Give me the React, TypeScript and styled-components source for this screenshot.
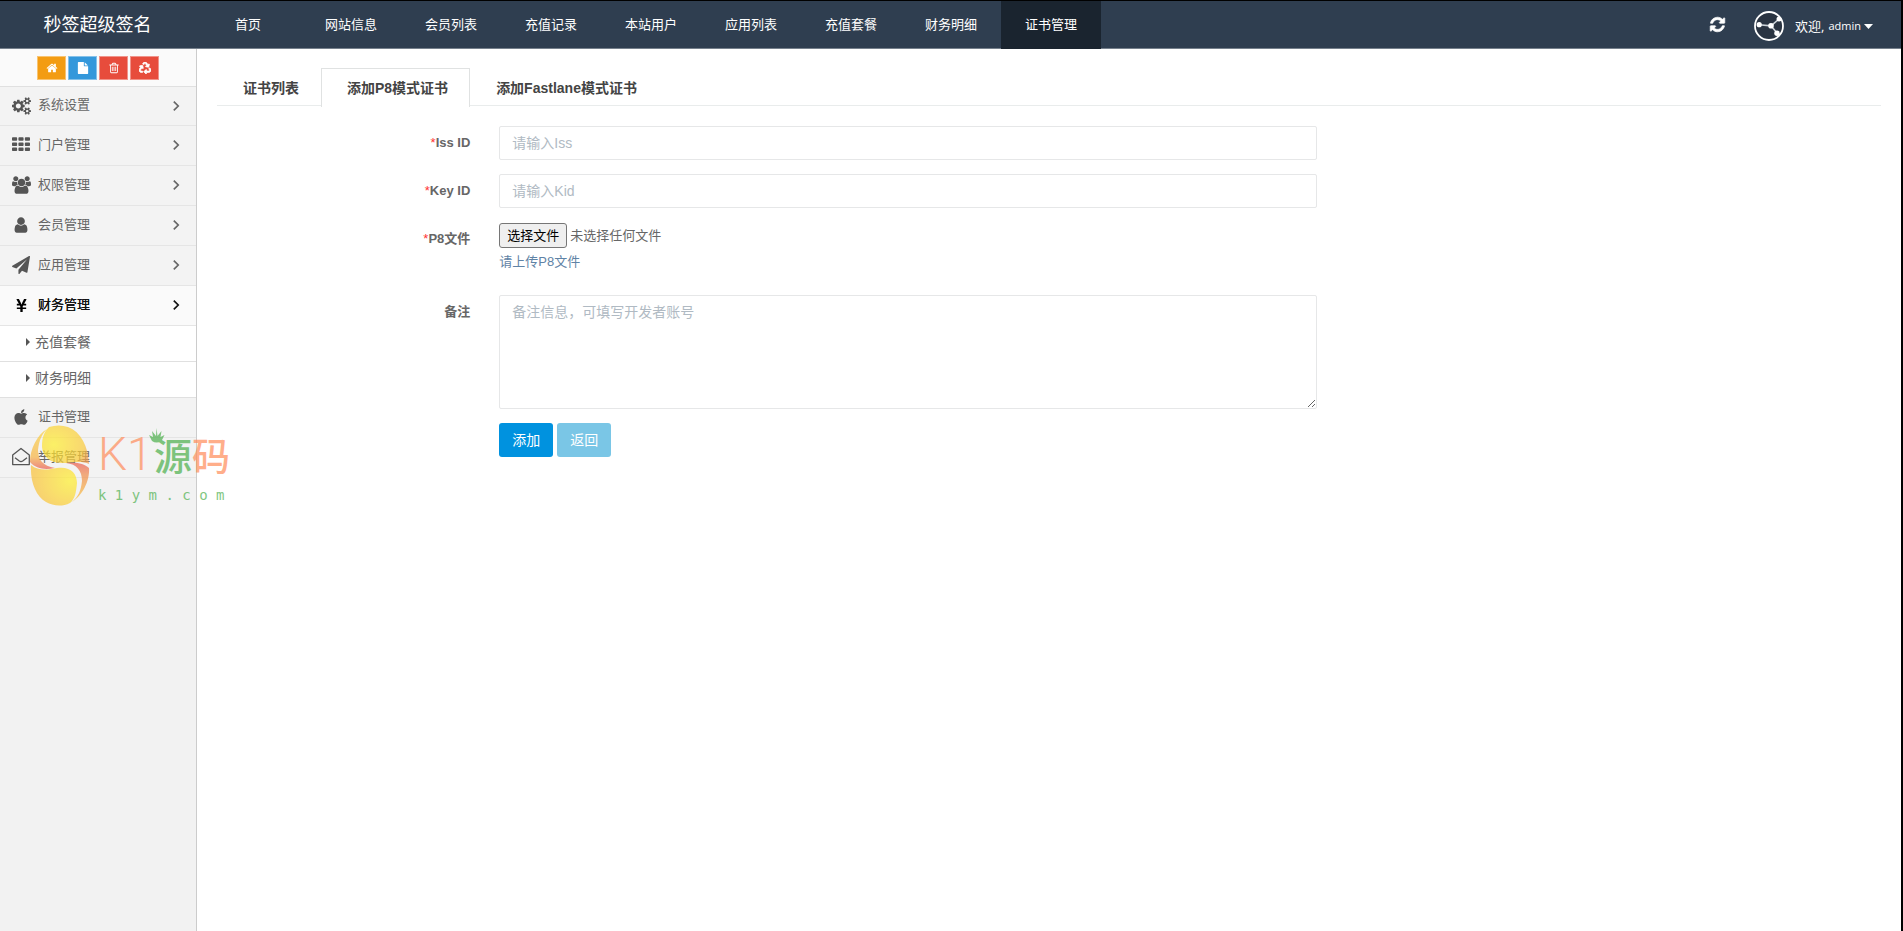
import React, { useRef, useState } from "react";
import styled, { createGlobalStyle, css } from "styled-components";
import { FaApple, FaRecycle, FaYenSign } from "react-icons/fa";

const sans = `"Liberation Sans", "Noto Sans CJK SC", sans-serif`;
const humanist = `"Open Sans", "Noto Sans CJK SC", sans-serif`;

const GlobalStyle = createGlobalStyle`
  *, *::before, *::after { box-sizing: border-box; }
  body {
    margin: 0;
    background: #fff;
    color: #666;
    font: 13px/20px ${sans};
  }
  button, input, textarea { font: inherit; }
  a { color: inherit; text-decoration: none; }
`;

const Page = styled.div`
  display: flex;
  flex-direction: column;
  min-height: 100vh;
  border-top: 1px solid #000;
  border-right: 2px solid #000;
`;

const Header = styled.header`
  display: flex;
  height: 48px;
  background: #2f3e50;
  border-bottom: 1px solid #76808c;
  color: #fff;
`;

const Brand = styled.a`
  flex: 0 0 195px;
  font-size: 18px;
  line-height: 48px;
  text-align: center;
`;

const TopNav = styled.nav`
  display: flex;
  flex: 1;
`;

const TopLink = styled.a<{ $active?: boolean; $wide?: boolean }>`
  width: ${(p) => (p.$wide ? 106 : 100)}px;
  line-height: 48px;
  height: 48px;
  text-align: center;
  background: ${(p) => (p.$active ? "#1a242f" : "transparent")};
`;

const Tools = styled.div`
  display: flex;
  align-items: center;
  padding-right: 28px;
`;

const IconButton = styled.button`
  display: flex;
  margin-right: 28px;
  padding: 0;
  border: 0;
  background: none;
  color: #fff;
`;

const UserMenu = styled.button`
  display: flex;
  align-items: center;
  padding: 3px 0 0;
  border: 0;
  background: none;
  color: #fff;
  font-family: ${humanist};
`;

const Welcome = styled.span`
  margin-left: 11px;
`;

const UserName = styled.span`
  margin: 0 3px 0 4px;
  font-size: 11px;
`;

const Body = styled.div`
  display: flex;
  flex: 1;
`;

const Sidebar = styled.aside`
  flex: 0 0 197px;
  background: #f2f2f2;
  border-right: 1px solid #ccc;
`;

const Shortcuts = styled.div`
  display: flex;
  justify-content: center;
  gap: 2px;
  height: 38px;
  padding-top: 7px;
  background: #fafafa;
  border-bottom: 1px solid #e0e0e0;
`;

const Shortcut = styled.button<{ $color: string }>`
  display: flex;
  align-items: center;
  justify-content: center;
  width: 29px;
  height: 24px;
  padding: 0;
  border: 1px solid rgba(255, 255, 255, 0.4);
  background: ${(p) => p.$color};
  background-clip: border-box;
  color: #fff;
`;

const MenuItem = styled.a<{ $open?: boolean }>`
  display: flex;
  align-items: center;
  height: 40px;
  padding: 0 16px 1px 11px;
  border-bottom: 1px solid #e5e5e5;
  background: ${(p) => (p.$open ? "#fafafa" : "#f3f3f3")};
  color: ${(p) => (p.$open ? "#111" : "inherit")};
  text-shadow: ${(p) => (p.$open ? "0 0 0 #111" : "none")};
  &:first-child { height: 39px; }
`;

const MenuIcon = styled.span<{ $open?: boolean }>`
  display: flex;
  justify-content: center;
  width: 20px;
  margin-right: 7px;
  color: ${(p) => (p.$open ? "#000" : "#555")};
`;

const MenuText = styled.span`
  flex: 1;
  padding-bottom: 1px;
`;

const SubItem = styled.a`
  display: flex;
  align-items: center;
  gap: 5px;
  height: 36px;
  padding: 0 0 3px 26px;
  background: #fff;
  border-bottom: 1px solid #e0e0e0;
  font-size: 14px;
`;

const Main = styled.main`
  flex: 1;
  min-width: 0;
  padding: 19px 20px;
`;

const Tabs = styled.div`
  display: flex;
  height: 38px;
  border-bottom: 1px solid #e9ecec;
`;

const Tab = styled.button<{ $active?: boolean }>`
  height: 39px;
  padding: 0 21px 1px 25px;
  border: 1px solid transparent;
  border-bottom: 0;
  background: ${(p) => (p.$active ? "#fff" : "transparent")};
  border-color: ${(p) => (p.$active ? "#e0e2e2" : "transparent")};
  color: #444;
  font-size: 14px;
  font-weight: bold;
`;

const Form = styled.form`
  display: flex;
  flex-direction: column;
  gap: 14px;
  padding-top: 20px;
`;

const Row = styled.div`
  display: grid;
  grid-template-columns: 2fr 6fr 4fr;
`;

const Label = styled.label`
  padding: 7px 24px 0 0;
  font-weight: bold;
  text-align: right;
`;

const Star = styled.span`
  color: #f33;
  font-weight: normal;
`;

const Field = styled.div`
  grid-column: 2;
  padding: 0 9px 0 5px;
`;

const control = css`
  display: block;
  width: 100%;
  padding: 6px 12px;
  border: 1px solid #e6e7e8;
  border-radius: 2px;
  background: #fff;
  color: #555;
  font-size: 14px;
  outline: none;
  &::placeholder { color: #b0bac3; opacity: 1; }
`;

const Input = styled.input`
  ${control}
  height: 34px;
`;

const TextArea = styled.textarea`
  ${control}
  height: 114px;
  resize: vertical;
`;

const FilePicker = styled.div`
  display: flex;
  align-items: center;
  gap: 3px;
  padding-top: 1px;
`;

const FileButton = styled.button`
  height: 25px;
  padding: 0 7px;
  border: 1px solid #767676;
  border-radius: 3px;
  background: #efefef;
  color: #000;
  line-height: 20px;
`;

const Hint = styled.p`
  margin: 4px 0 9px;
  color: #5f83a6;
`;

const Actions = styled(Field)`
  display: flex;
  gap: 4px;
`;

const Action = styled.button<{ $muted?: boolean }>`
  height: 34px;
  padding: 0 13px;
  border: 0;
  border-radius: 3px;
  background: ${(p) => (p.$muted ? "#7ac6e6" : "#0092df")};
  color: #fff;
  font-size: 14px;
`;

const Watermark = styled.div`
  position: absolute;
  top: 425px;
  left: 30px;
  display: flex;
  gap: 8px;
  opacity: 0.7;
  pointer-events: none;
`;

const MarkText = styled.div`
  position: relative;
  white-space: nowrap;
`;

const MarkTitle = styled.div`
  display: flex;
  align-items: center;
  height: 58px;
  color: #ff8c5a;
  font: 500 38px/58px "Noto Sans CJK SC", sans-serif;
`;

const MarkLatin = styled.span`
  width: 56px;
  font: 300 46px/56px Roboto, sans-serif;
`;

const MarkGreen = styled.span`
  color: #4cb04c;
`;

const MarkDomain = styled.div`
  padding-top: 2px;
  color: #4cb04c;
  font: 14px/20px "DejaVu Sans Mono", monospace;
`;

const Crown = styled.svg`
  position: absolute;
  left: 51px;
  top: 2px;
`;

const paths = {
  home: "M1472 992v480q0 26-19 45t-45 19h-384v-384h-256v384h-384q-26 0-45-19t-19-45v-480q0-1 .5-3t.5-3l575-474 575 474q1 2 1 6zm223-69l-62 74q-8 9-21 11h-3q-13 0-21-7l-692-577-692 577q-12 8-24 7-13-2-21-11l-62-74q-8-10-7-23.5t11-21.5l719-599q32-26 76-26t76 26l244 204v-195q0-14 9-23t23-9h192q14 0 23 9t9 23v408l219 182q10 8 11 21.5t-7 23.5z",
  file: "M1152 512v-472q22 14 36 28l408 408q14 14 28 36h-472zm-128 32q0 40 28 68t68 28h544v1056q0 40-28 68t-68 28h-1344q-40 0-68-28t-28-68v-1600q0-40 28-68t68-28h800v544z",
  trash: "M704 736v576q0 14-9 23t-23 9h-64q-14 0-23-9t-9-23v-576q0-14 9-23t23-9h64q14 0 23 9t9 23zm256 0v576q0 14-9 23t-23 9h-64q-14 0-23-9t-9-23v-576q0-14 9-23t23-9h64q14 0 23 9t9 23zm256 0v576q0 14-9 23t-23 9h-64q-14 0-23-9t-9-23v-576q0-14 9-23t23-9h64q14 0 23 9t9 23zm128 724v-948h-896v948q0 22 7 40.5t14.5 27 10.5 8.5h832q3 0 10.5-8.5t14.5-27 7-40.5zm-672-1076h448l-48-117q-7-9-17-11h-317q-10 2-17 11zm928 32v64q0 14-9 23t-23 9h-96v948q0 83-47 143.5t-113 60.5h-832q-66 0-113-58.5t-47-141.5v-952h-96q-14 0-23-9t-9-23v-64q0-14 9-23t23-9h309l70-167q15-37 54-63t79-26h320q40 0 79 26t54 63l70 167h309q14 0 23 9t9 23z",
  cogs: "M896 896q0-106-75-181t-181-75-181 75-75 181 75 181 181 75 181-75 75-181zm768 512q0-52-38-90t-90-38-90 38-38 90q0 53 37.5 90.5t90.5 37.5 90.5-37.5 37.5-90.5zm0-1024q0-52-38-90t-90-38-90 38-38 90q0 53 37.5 90.5t90.5 37.5 90.5-37.5 37.5-90.5zm-384 421v185q0 10-7 19.5t-16 10.5l-155 24q-11 35-32 76 34 48 90 115 7 11 7 20 0 12-7 19-23 30-82.5 89.5t-78.5 59.5q-11 0-21-7l-115-90q-37 19-77 31-11 108-23 155-7 24-30 24h-186q-11 0-20-7.5t-10-17.5l-23-153q-34-10-75-31l-118 89q-7 7-20 7-11 0-21-8-144-133-144-160 0-9 7-19 10-14 41-53t47-61q-23-44-35-82l-152-24q-10-1-17-9.5t-7-19.5v-185q0-10 7-19.5t16-10.5l155-24q11-35 32-76-34-48-90-115-7-11-7-20 0-12 7-20 22-30 82-89t79-59q11 0 21 7l115 90q34-18 77-32 11-108 23-154 7-24 30-24h186q11 0 20 7.5t10 17.5l23 153q34 10 75 31l118-89q8-7 20-7 11 0 21 8 144 133 144 160 0 8-7 19-12 16-42 54t-45 60q23 48 34 82l152 23q10 2 17 10.5t7 19.5zm640 533v140q0 16-149 31-12 27-30 52 51 113 51 138 0 4-4 7-122 71-124 71-8 0-46-47t-52-68q-20 2-30 2t-30-2q-14 21-52 68t-46 47q-2 0-124-71-4-3-4-7 0-25 51-138-18-25-30-52-149-15-149-31v-140q0-16 149-31 13-29 30-52-51-113-51-138 0-4 4-7 4-2 35-20t59-34 30-16q8 0 46 46.5t52 67.5q20-2 30-2t30 2q51-71 92-112l6-2q4 0 124 70 4 3 4 7 0 25-51 138 17 23 30 52 149 15 149 31zm0-1024v140q0 16-149 31-12 27-30 52 51 113 51 138 0 4-4 7-122 71-124 71-8 0-46-47t-52-68q-20 2-30 2t-30-2q-14 21-52 68t-46 47q-2 0-124-71-4-3-4-7 0-25 51-138-18-25-30-52-149-15-149-31v-140q0-16 149-31 13-29 30-52-51-113-51-138 0-4 4-7 4-2 35-20t59-34 30-16q8 0 46 46.5t52 67.5q20-2 30-2t30 2q51-71 92-112l6-2q4 0 124 70 4 3 4 7 0 25-51 138 17 23 30 52 149 15 149 31z",
  grid: "M0 208q0-80 80-80h352q80 0 80 80v192q0 80-80 80h-352q-80 0-80-80zM640 208q0-80 80-80h352q80 0 80 80v192q0 80-80 80h-352q-80 0-80-80zM1280 208q0-80 80-80h352q80 0 80 80v192q0 80-80 80h-352q-80 0-80-80zM0 720q0-80 80-80h352q80 0 80 80v192q0 80-80 80h-352q-80 0-80-80zM640 720q0-80 80-80h352q80 0 80 80v192q0 80-80 80h-352q-80 0-80-80zM1280 720q0-80 80-80h352q80 0 80 80v192q0 80-80 80h-352q-80 0-80-80zM0 1232q0-80 80-80h352q80 0 80 80v192q0 80-80 80h-352q-80 0-80-80zM640 1232q0-80 80-80h352q80 0 80 80v192q0 80-80 80h-352q-80 0-80-80zM1280 1232q0-80 80-80h352q80 0 80 80v192q0 80-80 80h-352q-80 0-80-80z",
  users: "M593 896q-162 5-265 128h-134q-82 0-138-40.5t-56-118.5q0-353 124-353 6 0 43.5 21t97.5 42.5 119 21.5q67 0 133-23-5 37-5 66 0 139 81 256zm1071 637q0 120-73 189.5t-194 69.5h-874q-121 0-194-69.5t-73-189.5q0-53 3.5-103.5t14-109 26.5-108.5 43-97.5 62-81 85.5-53.5 111.5-20q10 0 43 21.5t73 48 107 48 135 21.5 135-21.5 107-48 73-48 43-21.5q61 0 111.5 20t85.5 53.5 62 81 43 97.5 26.5 108.5 14 109 3.5 103.5zm-1024-1277q0 106-75 181t-181 75-181-75-75-181 75-181 181-75 181 75 75 181zm704 384q0 159-112.5 271.5t-271.5 112.5-271.5-112.5-112.5-271.5 112.5-271.5 271.5-112.5 271.5 112.5 112.5 271.5zm576 225q0 78-56 118.5t-138 40.5h-134q-103-123-265-128 81-117 81-256 0-29-5-66 66 23 133 23 59 0 119-21.5t97.5-42.5 43.5-21q124 0 124 353zm-128-609q0 106-75 181t-181 75-181-75-75-181 75-181 181-75 181 75 75 181z",
  user: "M1536 1399q0 109-62.5 187t-150.5 78h-854q-88 0-150.5-78t-62.5-187q0-85 8.5-160.5t31.5-152 58.5-131 94-89 134.5-34.5q131 128 313 128t313-128q76 0 134.5 34.5t94 89 58.5 131 31.5 152 8.5 160.5zm-256-887q0 159-112.5 271.5t-271.5 112.5-271.5-112.5-112.5-271.5 112.5-271.5 271.5-112.5 271.5 112.5 112.5 271.5z",
  plane: "M1764 11q33 24 27 64l-256 1536q-5 29-32 45-14 8-31 8-11 0-24-5l-453-185-242 295q-18 23-49 23-13 0-22-4-19-7-30.5-23.5t-11.5-36.5v-349l864-1059-1069 925-395-162q-37-14-40-55-2-40 32-59l1664-960q15-9 32-9 20 0 36 11z",
  refresh: "M1639 1056q0 5-1 7-64 268-268 434.5t-478 166.5q-146 0-282.5-55t-243.5-157l-129 129q-19 19-45 19t-45-19-19-45v-448q0-26 19-45t45-19h448q26 0 45 19t19 45-19 45l-137 137q71 66 161 102t187 36q134 0 250-65t186-179q11-17 53-117 8-23 30-23h192q13 0 22.5 9.5t9.5 22.5zm25-800v448q0 26-19 45t-45 19h-448q-26 0-45-19t-19-45 19-45l138-138q-148-137-349-137-134 0-250 65t-186 179q-11 17-53 117-8 23-30 23h-199q-13 0-22.5-9.5t-9.5-22.5v-7q65-268 270-434.5t480-166.5q146 0 284 55.5t245 156.5l130-129q19-19 45-19t45 19 19 45z",
};

function Icon({ name, size, box = 1792 }: { name: keyof typeof paths; size: number; box?: number }) {
  return (
    <svg
      width={Math.round((size * box) / 1792)}
      height={size}
      viewBox={`0 0 ${box} 1792`}
      fill="currentColor"
      stroke="currentColor"
      strokeWidth={name === "refresh" ? 70 : 0}
      aria-hidden="true"
    >
      <path d={paths[name]} />
    </svg>
  );
}

const Chevron = () => (
  <svg width="8" height="12" viewBox="0 0 8 12" fill="none" stroke="currentColor" strokeWidth="1.7" aria-hidden="true">
    <path d="M1.8 1.700 6.2 6 1.8 10.300" />
  </svg>
);

const OpenEnvelope = () => (
  <svg width="20" height="20" viewBox="0 0 20 20" fill="none" stroke="currentColor" strokeWidth="1.3" strokeLinejoin="round" aria-hidden="true">
    <path d="M1.7 8 10 1.5 18.3 8v9.6H1.7z" />
    <path d="M4 10.8 8.3 14q1.7 1.2 3.4 0L16 10.8" />
  </svg>
);

const Avatar = () => (
  <svg width="30" height="30" viewBox="0 0 30 30" aria-hidden="true">
    <circle cx="15" cy="15" r="14" fill="#2a3442" stroke="#fff" strokeWidth="1.8" />
    <path d="M5 13.700 17 14.800 25 8M17 14.800 23 22" stroke="#ccd2d8" strokeWidth="1.6" fill="none" />
    <g fill="#fff">
      <circle cx="5.2" cy="13.7" r="2.6" />
      <circle cx="17" cy="14.8" r="2.8" />
      <circle cx="25" cy="8" r="2.5" />
      <circle cx="23" cy="22.2" r="2.7" />
    </g>
  </svg>
);

const Egg = () => (
  <svg width="60" height="81" viewBox="0 0 60 81" aria-hidden="true">
    <defs>
      <radialGradient id="eggTop" cx="0.25" cy="0.5" r="0.8">
        <stop offset="0" stopColor="#fff02c" />
        <stop offset="0.8" stopColor="#fbcb38" />
        <stop offset="1" stopColor="#f5a050" />
      </radialGradient>
      <radialGradient id="eggBottom" cx="0.85" cy="0.4" r="0.8">
        <stop offset="0" stopColor="#fff02c" />
        <stop offset="1" stopColor="#fac23a" />
      </radialGradient>
      <linearGradient id="eggLeft" x1="0" y1="0" x2="0" y2="1">
        <stop offset="0" stopColor="#fbd23c" />
        <stop offset="0.7" stopColor="#f8b444" />
        <stop offset="1" stopColor="#ea5a50" />
      </linearGradient>
      <linearGradient id="eggRight" x1="0" y1="0" x2="0" y2="1">
        <stop offset="0" stopColor="#ea5a50" />
        <stop offset="0.3" stopColor="#f08a4c" />
        <stop offset="1" stopColor="#fbc83c" />
      </linearGradient>
    </defs>
    <path d="M19 2Q29-1 38 2C51 7 58 21 59 39 53 36 44 37 36 38 20 39 13 32 12 22 12 12 14 7 19 2z" fill="url(#eggTop)" />
    <path d="M17 4C7 10 0 24 0 37 6 44 15 45 25 43 13 41 8 35 8 25 9 15 12 9 17 4z" fill="url(#eggLeft)" />
    <path d="M1 40C8 46 18 45 27 43 40 41 47 48 47 58 46 68 45 74 40 78 32 82 23 81 16 77 6 71 0 57 1 40z" fill="url(#eggBottom)" />
    <path d="M42 77C52 71 60 56 59 43 54 38 46 37 36 38 47 39 52 46 52 56 51 66 48 72 42 77z" fill="url(#eggRight)" />
  </svg>
);

const topLinks = ["首页", "网站信息", "会员列表", "充值记录", "本站用户", "应用列表", "充值套餐", "财务明细", "证书管理"];

const menu: { label: string; icon: React.ReactNode; leaf?: boolean; children?: string[] }[] = [
  { label: "系统设置", icon: <Icon name="cogs" size={18} box={1920} /> },
  { label: "门户管理", icon: <Icon name="grid" size={18} /> },
  { label: "权限管理", icon: <Icon name="users" size={18} box={1920} /> },
  { label: "会员管理", icon: <Icon name="user" size={18} /> },
  { label: "应用管理", icon: <Icon name="plane" size={18} /> },
  { label: "财务管理", icon: <FaYenSign size={15} />, children: ["充值套餐", "财务明细"] },
  { label: "证书管理", icon: <FaApple size={18} />, leaf: true },
  { label: "举报管理", icon: <OpenEnvelope />, leaf: true },
];

const tabs = ["证书列表", "添加P8模式证书", "添加Fastlane模式证书"];

export default function App() {
  const picker = useRef<HTMLInputElement>(null);
  const [fileName, setFileName] = useState("未选择任何文件");
  const [tab, setTab] = useState(1);

  return (
    <>
      <GlobalStyle />
      <Page>
        <Header>
          <Brand href="#">秒签超级签名</Brand>
          <TopNav>
            {topLinks.map((text, i) => (
              <TopLink key={text} href="#" $wide={i === 0} $active={i === topLinks.length - 1}>
                {text}
              </TopLink>
            ))}
          </TopNav>
          <Tools>
            <IconButton type="button" aria-label="刷新">
              <Icon name="refresh" size={17} />
            </IconButton>
            <UserMenu type="button">
              <Avatar />
              <Welcome>欢迎,</Welcome>
              <UserName>admin</UserName>
              <svg width="9" height="5" viewBox="0 0 9 5" fill="#fff" aria-hidden="true">
                <path d="M0 0h9L4.5 5z" />
              </svg>
            </UserMenu>
          </Tools>
        </Header>
        <Body>
          <Sidebar>
            <Shortcuts>
              <Shortcut type="button" aria-label="首页" $color="#f39c12"><Icon name="home" size={12} /></Shortcut>
              <Shortcut type="button" aria-label="文件" $color="#3498db"><Icon name="file" size={12} /></Shortcut>
              <Shortcut type="button" aria-label="删除" $color="#e74c3c"><Icon name="trash" size={12} /></Shortcut>
              <Shortcut type="button" aria-label="回收" $color="#e74c3c"><FaRecycle size={12} stroke="#fff" strokeWidth={30} /></Shortcut>
            </Shortcuts>
            <nav>
              {menu.map((item) => (
                <React.Fragment key={item.label}>
                  <MenuItem href="#" $open={!!item.children} aria-expanded={item.leaf ? undefined : !!item.children}>
                    <MenuIcon $open={!!item.children}>{item.icon}</MenuIcon>
                    <MenuText>{item.label}</MenuText>
                    {!item.leaf && <Chevron />}
                  </MenuItem>
                  {item.children?.map((child) => (
                    <SubItem key={child} href="#">
                      <svg width="4" height="8" viewBox="0 0 4 8" fill="#555" aria-hidden="true">
                        <path d="M0 0l4 4-4 4z" />
                      </svg>
                      {child}
                    </SubItem>
                  ))}
                </React.Fragment>
              ))}
            </nav>
          </Sidebar>
          <Main>
            <Tabs role="tablist">
              {tabs.map((text, i) => (
                <Tab key={text} type="button" role="tab" aria-selected={i === tab} $active={i === tab} onClick={() => setTab(i)}>
                  {text}
                </Tab>
              ))}
            </Tabs>
            <Form onSubmit={(e) => e.preventDefault()}>
              <Row>
                <Label htmlFor="iss"><Star>*</Star>Iss ID</Label>
                <Field><Input id="iss" placeholder="请输入Iss" /></Field>
              </Row>
              <Row>
                <Label htmlFor="kid"><Star>*</Star>Key ID</Label>
                <Field><Input id="kid" placeholder="请输入Kid" /></Field>
              </Row>
              <Row>
                <Label htmlFor="p8"><Star>*</Star>P8文件</Label>
                <Field>
                  <FilePicker>
                    <input
                      id="p8"
                      type="file"
                      hidden
                      ref={picker}
                      onChange={(e) => setFileName(e.target.files?.[0]?.name ?? "未选择任何文件")}
                    />
                    <FileButton type="button" onClick={() => picker.current?.click()}>选择文件</FileButton>
                    <span>{fileName}</span>
                  </FilePicker>
                  <Hint>请上传P8文件</Hint>
                </Field>
              </Row>
              <Row>
                <Label htmlFor="remark">备注</Label>
                <Field><TextArea id="remark" placeholder="备注信息，可填写开发者账号" /></Field>
              </Row>
              <Row>
                <Actions>
                  <Action type="submit">添加</Action>
                  <Action type="button" $muted>返回</Action>
                </Actions>
              </Row>
            </Form>
          </Main>
        </Body>
      </Page>
      <Watermark>
        <Egg />
        <MarkText>
          <MarkTitle>
            <MarkLatin>K1</MarkLatin>
            <MarkGreen>源</MarkGreen>码
          </MarkTitle>
          <MarkDomain>k 1 y m . c o m</MarkDomain>
          <Crown width="16" height="16" viewBox="0 0 16 16" fill="#4cb04c" aria-hidden="true">
            <path d="M3 14 0 8l4 2-1-6 4 5 .5-8 1 8 4-5-1 6 4-2-3 6q-5 3-9.500 0z" />
          </Crown>
        </MarkText>
      </Watermark>
    </>
  );
}
